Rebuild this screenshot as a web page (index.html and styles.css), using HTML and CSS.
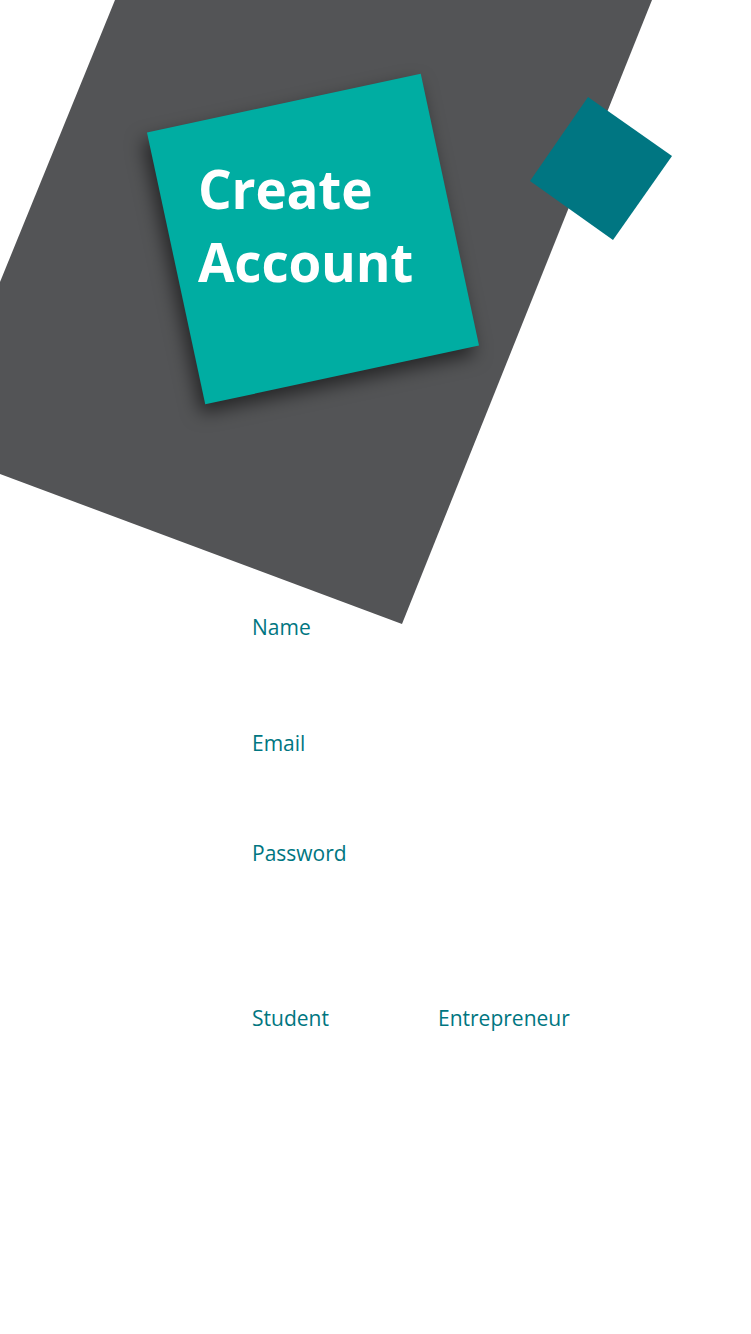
FILE: index.html
```html
<!DOCTYPE html>
<html lang="en">
<head>
  <meta charset="UTF-8" />
  <meta name="viewport" content="width=device-width, initial-scale=1.0"/>
  <title>Create Account</title>
  <link rel="stylesheet" href="styles.css">
</head>
<body>

  <!-- Header: background shapes + title card -->
  <div class="hero">
    <svg class="hero-bg" width="751" height="630" viewBox="0 0 751 630">
      <polygon points="115,0 652,0 402,624 0,474 0,282" fill="#535456" />
      <polygon points="588,97 672,156 613,240 530,181" fill="#007682" />
    </svg>

    <div class="card">
      <h1>Create<br>Account</h1>
    </div>
  </div>

  <!-- Form labels -->
  <form class="form">
    <div class="field field-name">
      <label>Name</label>
    </div>
    <div class="field field-email">
      <label>Email</label>
    </div>
    <div class="field field-password">
      <label>Password</label>
    </div>
    <div class="roles">
      <label class="role">Student</label>
      <label class="role">Entrepreneur</label>
    </div>
  </form>

</body>
</html>
```

FILE: styles.css
```css
body {
  margin: 0;
  padding: 0;
  background-color: #fff;
  font-family: 'Open Sans', 'Noto Sans', sans-serif;
}

.hero {
  position: relative;
  height: 600px;
}

.hero-bg {
  position: absolute;
  top: 0;
  left: 0;
}

.card {
  position: relative;
  width: 280px;
  height: 278px;
  margin-left: 173px;
  top: 100px;
}

.card::before {
  content: '';
  position: absolute;
  inset: 0;
  background-color: #00ada2;
  transform: rotate(-12.1deg);
  box-shadow: -6px 8px 18px rgba(0, 0, 0, 0.55);
}

.card h1 {
  position: relative;
  margin: 0;
  padding: 52px 0 0 25px;
  color: #fff;
  font-size: 53px;
  font-weight: 700;
  line-height: 73px;
  letter-spacing: -0.2px;
}

.form {
  position: relative;
  padding-left: 252px;
}

.field label,
.role {
  display: block;
  color: #007681;
  font-size: 21px;
  line-height: 28px;
}

.field-name {
  margin-top: 13px;
}

.field-email {
  margin-top: 88px;
}

.field-password {
  margin-top: 82px;
}

.roles {
  display: flex;
  margin-top: 137px;
}

.role {
  width: 186px;
}
```
